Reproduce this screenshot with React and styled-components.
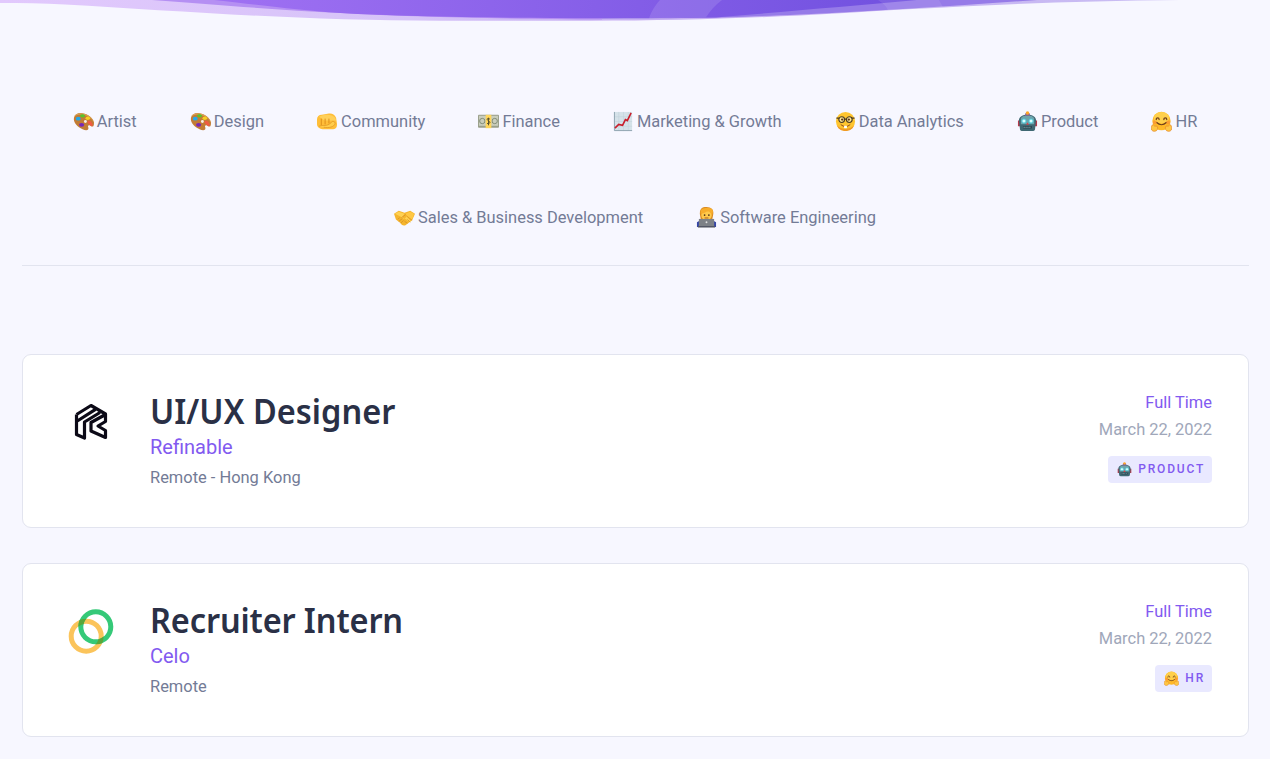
import styled, { createGlobalStyle } from "styled-components";

const GlobalStyle = createGlobalStyle`
    * {
        box-sizing: border-box;
    }
    body {
        margin: 0;
        background: #f7f7ff;
        color: #718096;
        font-family: Roboto, "Liberation Sans", sans-serif;
        font-size: 16.46px;
        overflow: hidden;
    }
`;

const StyledPage = styled.div`
    height: 759px;
    overflow: hidden;
`;

const StyledWave = styled.svg`
    display: block;
    width: 1270px;
    height: 22px;
`;

const StyledCategories = styled.nav`
    display: flex;
    flex-direction: column;
    gap: 72px;
    margin: 0 21px 0 22px;
    padding: 88px 0 35px;
    border-bottom: 1px solid #e2e4ef;
`;

const StyledCategoryRow = styled.div`
    display: flex;
    justify-content: center;
    gap: 53.1px;
    padding-right: 1px;
`;

const StyledCategory = styled.a`
    display: flex;
    align-items: center;
    gap: 3px;
    height: 24px;
    line-height: 24px;
    white-space: nowrap;
    color: #737b96;
`;

const StyledEmoji = styled.svg`
    flex: none;
    width: ${(props) => props.$size}px;
    height: ${(props) => props.$size}px;
    margin-top: -1px;
`;

const StyledJobs = styled.main`
    display: flex;
    flex-direction: column;
    gap: 35px;
    padding: 88px 21px 0 22px;
`;

const StyledJob = styled.article`
    display: flex;
    height: 174px;
    padding: 35px 36px 0 40px;
    background: #fff;
    border: 1px solid #e2e4ef;
    border-radius: 9px;
`;

const StyledLogo = styled.svg`
    flex: none;
    width: 56px;
    height: 56px;
    margin-top: 4px;
`;

const StyledInfo = styled.div`
    flex: 1;
    padding-left: 31px;
`;

const StyledTitle = styled.h2`
    margin: -1px 0 1px;
    height: 44px;
    color: #2a3046;
    font-family: "Noto Sans", sans-serif;
    font-size: 35px;
    font-weight: 600;
    line-height: 44px;
    letter-spacing: ${(props) => props.$spacing}px;
    white-space: nowrap;
    transform: scaleX(0.93);
    transform-origin: left;
`;

const StyledCompany = styled.div`
    color: #825af0;
    font-size: 20px;
    line-height: 26px;
`;

const StyledLocation = styled.div`
    margin-top: 6px;
    line-height: 24px;
    color: #737b96;
`;

const StyledMeta = styled.div`
    display: flex;
    flex-direction: column;
    align-items: flex-end;
    line-height: 27px;
`;

const StyledType = styled.span`
    margin-top: -1px;
    color: #825af0;
`;

const StyledDate = styled.span`
    color: #a0a7ba;
`;

const StyledTag = styled.span`
    display: flex;
    align-items: center;
    gap: 6px;
    height: 27px;
    margin-top: 13px;
    padding: 0 7px 0 9px;
    background: #e9e9ff;
    border-radius: 4px;
    color: #825af0;
    font-size: 12px;
    font-weight: 500;
    letter-spacing: 1.8px;
    text-transform: uppercase;
`;

const Palette = () => (
    <>
        <path d="M1 7C2 3 7 1 12 3c5 1 9 5 10 9 0 4-1 5-3 4-2-2-4-1-3 1 1 3-2 4-6 2C5 17 0 12 1 7Z" fill="#c27c35" />
        <path d="M1 6c2-4 7-4 11-3 5 2 9 5 10 9-3-5-7-7-11-8C7 3 4 4 1 6Z" fill="#dba255" />
        <ellipse cx="5.5" cy="8" rx="2.6" ry="2" fill="#25a8e8" />
        <ellipse cx="10" cy="5" rx="2.6" ry="1.7" fill="#55c52c" />
        <ellipse cx="15.5" cy="7.5" rx="2.4" ry="1.8" fill="#f5cf22" />
        <ellipse cx="9" cy="14.5" rx="2.7" ry="2" fill="#7727b8" />
        <path d="m16 10 3 1 2 4-2 1-4-4Z" fill="#f05b43" />
        <circle cx="13" cy="11" r="1.5" fill="#f7eee6" />
    </>
);

const Fist = () => (
    <>
        <path d="M0 9c0-3 2-5 5-5l6-1c4-1 7 0 9 4l1 7c0 3-1 5-4 5H6c-3 0-6-2-6-5Z" fill="#ffbe38" />
        <path d="M2 6c5-3 14-3 17 1l1 3H8Z" fill="#ffd05a" />
        <path d="M4.500 8v7M8.500 8v6M12.500 8v5" stroke="#d88615" strokeWidth=".9" />
        <path d="M2 16c5-2 8 1 13-4 1-2 4-1 4 1-1 4-7 5-12 4" fill="#ffcd4c" stroke="#dd9020" strokeWidth=".7" />
    </>
);

const Money = () => (
    <>
        <rect x="0" y="4" width="22" height="13.5" rx="1" fill="#9a9f8b" />
        <rect x="1" y="5" width="20" height="10.5" fill="#c9cdbd" />
        <circle cx="4.5" cy="10.5" r="2.8" fill="none" stroke="#7f8973" />
        <circle cx="17.5" cy="10.5" r="2.8" fill="none" stroke="#7f8973" />
        <path d="M8 4h6v14H8Z" fill="#ffd55b" />
        <path d="M12.500 8.500c-3-1.500-4 0-1.500 2 3 1 1 3.500-1.500 2.500m1.500-6v8" fill="none" stroke="#57502d" />
    </>
);

const Chart = () => (
    <>
        <path d="M1 1h19v20H1Z" fill="#d5e2e9" />
        <path d="M6 1v20m5-20v20m5-20v20M1 6h19M1 11h19M1 16h19" stroke="#c3d3dc" strokeWidth=".6" />
        <path d="M1.500 1v19.500H20" fill="none" stroke="#90a4b0" />
        <path d="m2 18 4-4 4 1 3-6 2 1 4-8" fill="none" stroke="#c91e2c" strokeWidth="1.7" />
    </>
);

const Nerd = () => (
    <>
        <circle cx="11" cy="11" r="10" fill="#ffc52e" />
        <path d="M2 15c4 5 14 5 18 0-2 8-16 8-18 0Z" fill="#f09a25" />
        <circle cx="7" cy="9" r="3" fill="#ffe896" stroke="#4b3b22" strokeWidth="1.2" />
        <circle cx="15" cy="9" r="3" fill="#ffe896" stroke="#4b3b22" strokeWidth="1.2" />
        <path d="M1.500 7.500h3m5 1h3m5-1h3" stroke="#4b3b22" strokeWidth="1.4" />
        <circle cx="7.500" cy="9" r="1.200" fill="#5b3519" />
        <circle cx="14.500" cy="9" r="1.200" fill="#5b3519" />
        <path d="M6 14c3 3 7 3 10 0" fill="none" stroke="#8b431c" />
        <path d="M9.500 15.500h3v2.500h-3Z" fill="#fff" />
    </>
);

const Robot = () => (
    <>
        <path d="M1 10h3v6H1Zm17 0h3v6h-3Z" fill="#b23b4c" />
        <path d="M2 10c0-4 4-6 9-6s9 2 9 6l-1 8c0 3-2 3-4 3H7c-2 0-4 0-4-3Z" fill="#3f6873" />
        <path d="M4 8c1-3 4-3 7-3s6 0 7 3v6H4Z" fill="#6ea3ac" />
        <path d="M9 2h4l1 3H8Z" fill="#8c6a98" />
        <circle cx="11" cy="2" r="1.800" fill="#ffa528" />
        <circle cx="7.300" cy="10.500" r="2.200" fill="#d9ffff" stroke="#46c8da" />
        <circle cx="14.700" cy="10.500" r="2.200" fill="#d9ffff" stroke="#46c8da" />
        <path d="m11 12-1.500 2.500h3Z" fill="#df3c42" />
        <path d="M6.500 17h9" stroke="#263e4a" strokeWidth="2.500" />
        <path d="M7 17h8" stroke="#b2dce0" strokeDasharray="1 1" />
    </>
);

const Hug = () => (
    <>
        <circle cx="11" cy="10.5" r="9.6" fill="#ffb928" />
        <ellipse cx="11" cy="7" rx="8" ry="6" fill="#ffd04b" />
        <path d="M5.500 9c0-2.500 3-2.500 3 0m5 0c0-2.500 3-2.500 3 0M6 12c3 3 7 3 10 0" fill="none" stroke="#70401d" strokeWidth="1.3" strokeLinecap="round" />
        <circle cx="4" cy="12" r="2" fill="#f98a38" opacity=".6" />
        <circle cx="18" cy="12" r="2" fill="#f98a38" opacity=".6" />
        <path d="M1 15c1-1 2 0 3 1 2-1 3 0 3 2 0 2-2 4-5 3-2-1-2-3-1-6Zm20 0c-1-1-2 0-3 1-2-1-3 0-3 2 0 2 2 4 5 3 2-1 2-3 1-6Z" fill="#ffc744" stroke="#e68d2d" strokeWidth=".8" />
    </>
);

const Handshake = () => (
    <>
        <path d="m0 7 5-3 6 2 6-2 5 3-3 7-7 5c-2 1-4 0-5-2l-5-4Z" fill="#f5b52e" />
        <path d="m1 7 4-2 6 2-3 5c2 1 4 0 5-2l5 5c-2 1-4-1-5-2" fill="#ffd153" />
        <path d="m8 11 4-3 7 6m-5-1 3 3m-6-1 3 2M4 13l2-2m-1 4 4-3m-2 5 3-3" fill="none" stroke="#d28d25" strokeWidth=".8" />
        <path d="m12 7 5-2 4 2-2 6-6-4" fill="#ffc743" />
    </>
);

const Coder = () => (
    <>
        <path d="M1 21v-5l5-3h10l5 3v5Z" fill="#3545a5" />
        <path d="M4 7c0-5 2-7 7-7s8 3 7 8l-1 5H5Z" fill="#dc8c20" />
        <ellipse cx="11" cy="8.5" rx="5.5" ry="5.5" fill="#ffc94b" />
        <path d="M5 7c5 0 5-3 9-2l3 3c2-5 0-7-5-7S4 2 5 7Z" fill="#f7ad2c" />
        <circle cx="9" cy="8.500" r=".9" fill="#513319" />
        <circle cx="13.500" cy="8.500" r=".9" fill="#513319" />
        <path d="M9 11.5h4" stroke="#a85720" />
        <path d="M3 12.500h16V20H3Z" fill="#7d8187" />
        <path d="M2 20h18v1.500H2Z" fill="#55585f" />
        <circle cx="11" cy="16" r="1" fill="#e0e0e0" />
    </>
);

const emojis = {
    palette: Palette,
    fist: Fist,
    money: Money,
    chart: Chart,
    nerd: Nerd,
    robot: Robot,
    hug: Hug,
    handshake: Handshake,
    coder: Coder,
};

const Emoji = ({ name, size = 21 }) => {
    const Drawing = emojis[name];
    return (
        <StyledEmoji viewBox="0 0 22 22" $size={size} aria-hidden="true">
            <Drawing />
        </StyledEmoji>
    );
};

const RefinableLogo = () => (
    <StyledLogo viewBox="0 0 56 56">
        <g fill="none" stroke="#0c0a17" strokeWidth="3.2" strokeLinejoin="round">
            <path d="M13.500 20.500 28 11.500l14.500 8.500v7.500L35 32l7.500 4.500v7L28 37v-8.500L42.500 20.500" />
            <path d="M13.500 20.500v20l8 3.500V28L37 18.500M13.500 27.500 32.500 15.300" />
        </g>
    </StyledLogo>
);

const CeloLogo = () => (
    <StyledLogo viewBox="0 0 56 56">
        <clipPath id="celo-ring">
            <path clipRule="evenodd" d="M15.300 23.800a17.500 17.500 0 1 0 35 0a17.500 17.500 0 1 0-35 0ZM20.300 23.800a12.500 12.500 0 1 0 25 0a12.500 12.500 0 1 0-25 0Z" />
        </clipPath>
        <circle cx="23.2" cy="33.2" r="15" fill="none" stroke="#fbc45b" strokeWidth="5" />
        <circle cx="32.8" cy="23.8" r="15" fill="none" stroke="#35c978" strokeWidth="5" />
        <circle cx="23.2" cy="33.2" r="15" fill="none" stroke="#5aa63a" strokeWidth="5" clipPath="url(#celo-ring)" />
    </StyledLogo>
);

const Wave = () => (
    <StyledWave viewBox="0 0 1270 22">
        <defs>
            <linearGradient id="soft" gradientUnits="userSpaceOnUse" x1="0" x2="1170" y1="0" y2="0">
                <stop offset="0" stopColor="#e2c9fd" />
                <stop offset=".35" stopColor="#d6c3f8" />
                <stop offset=".55" stopColor="#c5adf2" />
                <stop offset="1" stopColor="#c9bdf3" />
            </linearGradient>
            <linearGradient id="deep" gradientUnits="userSpaceOnUse" x1="210" x2="920" y1="0" y2="0">
                <stop offset="0" stopColor="#a071f3" />
                <stop offset="1" stopColor="#7050df" />
            </linearGradient>
        </defs>
        <path d="M0 0v3c22 0 43 0 65 1.500C180 11 300 20.700 440 20.700h150c75 0 140-2 210-5.200C920 8.500 1040 1 1180 0Z" fill="url(#soft)" />
        <path d="M600 18.500c90 0 130-1 200-4C880 11 950 6 1037 0H600Z" fill="#967be8" />
        <path d="M152 0c68 5 125 10 190 13 60 4 180 6 260 6.500V0Z" fill="#b58ff3" />
        <path d="M214 0c55 6 82 10 126 13 90 5 230 6 376 4.500C775 12.500 850 6 917 0Z" fill="url(#deep)" />
        <path d="M660 0h62c-7 5-12 11-16 17.300l-57 1.200c2-7 7-14 11-18.500Z" fill="#fff" opacity=".12" />
        <path d="M878 0h61l4 7.200-55 3.300c-1-4-6-8-10-10.500Z" fill="#fff" opacity=".09" />
    </StyledWave>
);

const categoryRows = [
    [
        { emoji: "palette", label: "Artist" },
        { emoji: "palette", label: "Design" },
        { emoji: "fist", label: "Community" },
        { emoji: "money", label: "Finance" },
        { emoji: "chart", label: "Marketing & Growth" },
        { emoji: "nerd", label: "Data Analytics" },
        { emoji: "robot", label: "Product" },
        { emoji: "hug", label: "HR" },
    ],
    [
        { emoji: "handshake", label: "Sales & Business Development" },
        { emoji: "coder", label: "Software Engineering" },
    ],
];

const jobs = [
    {
        title: "UI/UX Designer",
        spacing: 0,
        company: "Refinable",
        location: "Remote - Hong Kong",
        logo: RefinableLogo,
        emoji: "robot",
        tag: "Product",
    },
    {
        title: "Recruiter Intern",
        spacing: -0.15,
        company: "Celo",
        location: "Remote",
        logo: CeloLogo,
        emoji: "hug",
        tag: "HR",
    },
];

const Job = (props) => {

    const { title, spacing, company, location, logo: Logo, emoji, tag } = props;

    return (
        <StyledJob>
            <Logo />
            <StyledInfo>
                <StyledTitle $spacing={spacing}>{title}</StyledTitle>
                <StyledCompany>{company}</StyledCompany>
                <StyledLocation>{location}</StyledLocation>
            </StyledInfo>
            <StyledMeta>
                <StyledType>Full Time</StyledType>
                <StyledDate>March 22, 2022</StyledDate>
                <StyledTag>
                    <Emoji name={emoji} size={15} />
                    {tag}
                </StyledTag>
            </StyledMeta>
        </StyledJob>
    );
};

const App = () => (
    <StyledPage>
        <GlobalStyle />
        <Wave />
        <StyledCategories>
            {categoryRows.map((row, index) => (
                <StyledCategoryRow key={index}>
                    {row.map(({ emoji, label }) => (
                        <StyledCategory key={label}>
                            <Emoji name={emoji} />
                            {label}
                        </StyledCategory>
                    ))}
                </StyledCategoryRow>
            ))}
        </StyledCategories>
        <StyledJobs>
            {jobs.map((job) => <Job key={job.title} {...job} />)}
        </StyledJobs>
    </StyledPage>
);

export default App;
